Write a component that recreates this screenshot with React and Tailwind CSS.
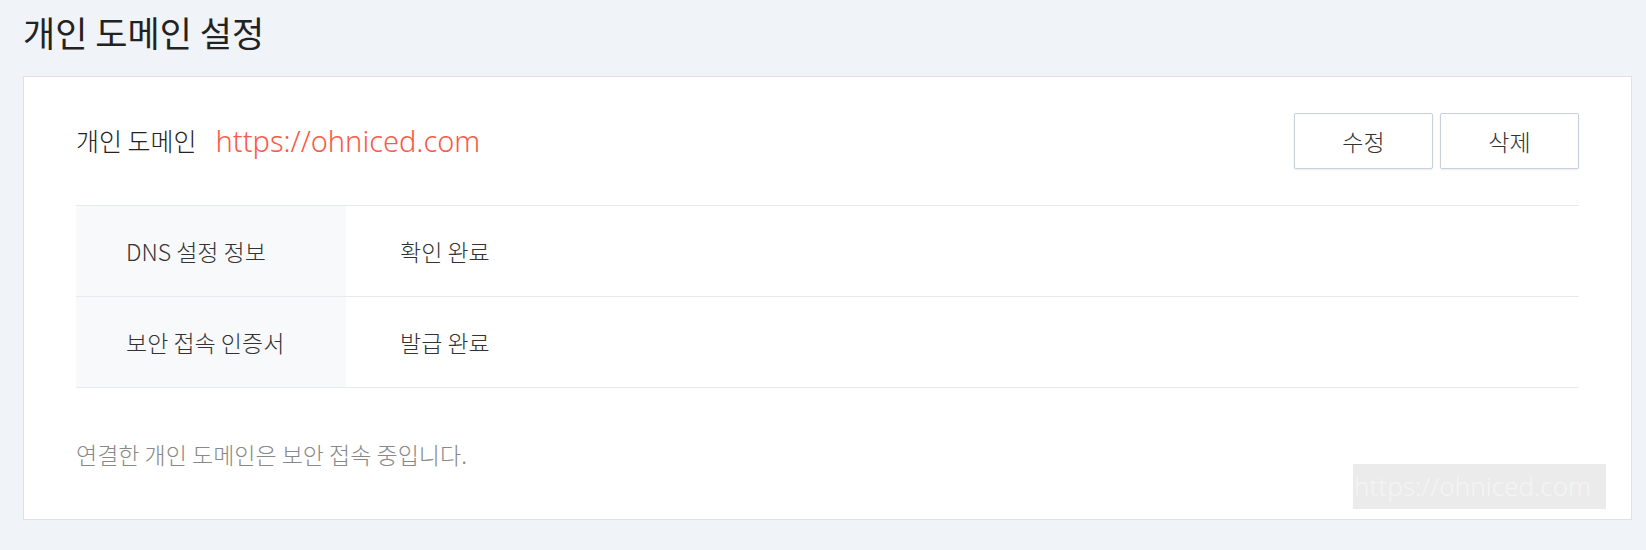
import React from "react";

const font = { fontFamily: '"Noto Sans CJK KR", "Noto Sans", sans-serif' };

export default function App() {
  return (
    <div
      className="w-[1646px] h-[550px] bg-[#f0f3f7] pl-[23px] pr-[14px] pt-[8px] overflow-hidden font-light"
      style={font}
    >
      <h1 className="text-[35px] leading-[48px] text-[#222] h-[68px] font-normal">개인 도메인 설정</h1>
      <div className="relative bg-white border border-[#dde2ea] h-[444px] pt-[36px] px-[52px]">
        <div className="flex items-center justify-between h-[56px]">
          <div className="flex items-center">
            <span className="text-[25px] text-[#222]">개인 도메인</span>
            <span className="ml-[19px] text-[29px] text-[#fa5a47]" style={{ fontFamily: '"Noto Sans", sans-serif' }}>
              https://ohniced.com
            </span>
          </div>
          <div className="flex gap-[7px]">
            <button className="w-[139px] h-[56px] border border-[#c8d0dc] rounded-[2px] bg-white text-[23px] text-[#333] shadow-[0_1px_2px_rgba(0,0,0,0.08)]">
              수정
            </button>
            <button className="w-[139px] h-[56px] border border-[#c8d0dc] rounded-[2px] bg-white text-[23px] text-[#333] shadow-[0_1px_2px_rgba(0,0,0,0.08)]">
              삭제
            </button>
          </div>
        </div>
        <div className="mt-[36px] border-t border-[#e6e9ee]">
          <div className="flex h-[91px] border-b border-[#e6e9ee] text-[23px] text-[#333]">
            <div className="w-[270px] bg-[#f8f9fb] flex items-center pl-[50px]">DNS 설정 정보</div>
            <div className="flex items-center pl-[54px]">확인 완료</div>
          </div>
          <div className="flex h-[91px] border-b border-[#e6e9ee] text-[23px] text-[#333]">
            <div className="w-[270px] bg-[#f8f9fb] flex items-center pl-[50px]">보안 접속 인증서</div>
            <div className="flex items-center pl-[54px]">발급 완료</div>
          </div>
        </div>
        <p className="mt-[50px] text-[23px] leading-[32px] text-[#888]">연결한 개인 도메인은 보안 접속 중입니다.</p>
        <div className="absolute left-[1329px] top-[387px] w-[253px] h-[45px] bg-[#ebebeb] flex items-center overflow-hidden">
          <span className="text-[26px] text-[#f4f4f4] whitespace-nowrap pl-[1px]" style={{ fontFamily: '"Noto Sans", sans-serif' }}>
            https://ohniced.com
          </span>
        </div>
      </div>
    </div>
  );
}
